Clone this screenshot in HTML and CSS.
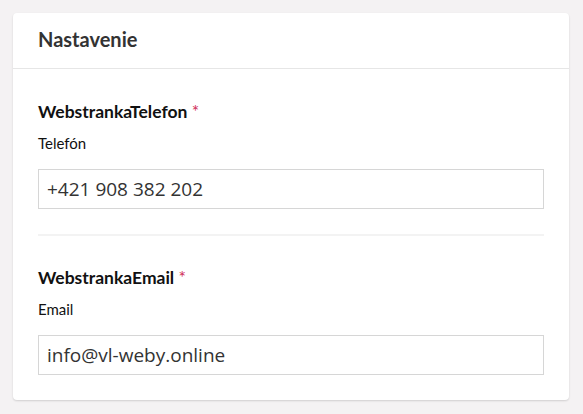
FILE: index.html
```html
<!DOCTYPE html>
<html lang="sk">
<head>
<meta charset="utf-8">
<title>Nastavenie</title>
<link rel="stylesheet" href="styles.css">
</head>
<body>
<div class="card">
  <div class="card-header">
    <h2 class="card-title">Nastavenie</h2>
  </div>
  <div class="card-body">
    <div class="field">
      <div class="field-name">WebstrankaTelefon <span class="req">*</span></div>
      <label class="field-label" for="tel">Telefón</label>
      <input class="field-input" id="tel" type="text" value="+421 908 382 202">
    </div>
    <div class="separator"></div>
    <div class="field">
      <div class="field-name">WebstrankaEmail <span class="req">*</span></div>
      <label class="field-label" for="mail">Email</label>
      <input class="field-input" id="mail" type="text" value="info@vl-weby.online">
    </div>
  </div>
</div>
</body>
</html>
```

FILE: styles.css
```css
html, body {
  margin: 0;
  padding: 0;
}
body {
  background: #f4f2f3;
  font-family: Lato, "Noto Sans", sans-serif;
  color: #1a1a1a;
  padding: 13px 14px 13px 13px;
}
.card {
  background: #ffffff;
  border-radius: 4px;
  box-shadow: 0 1px 2px rgba(0, 0, 0, 0.15);
}
.card-header {
  padding: 14px 25px 17px 25px;
  border-bottom: 1px solid #e6e6e6;
}
.card-title {
  margin: 0;
  font-size: 20px;
  line-height: 24px;
  font-weight: 700;
  color: #333333;
}
.card-body {
  padding: 32px 25px 25px 25px;
}
.field {
  display: flex;
  flex-direction: column;
}
.field-name {
  font-size: 17.5px;
  line-height: 22px;
  font-weight: 700;
  color: #111111;
}
.req {
  color: #d0305a;
  font-weight: 400;
}
.field-label {
  margin-top: 10px;
  font-size: 15px;
  line-height: 20px;
  color: #111111;
}
.field-input {
  margin-top: 16px;
  height: 40px;
  box-sizing: border-box;
  border: 1px solid #d6d6d6;
  border-radius: 0;
  padding: 0 8px;
  font-family: "Open Sans", "Noto Sans", sans-serif;
  font-size: 19px;
  color: #333333;
  background: #ffffff;
  outline: none;
}
.separator {
  height: 2px;
  background: #f3f3f3;
  margin: 25px 0 31px 0;
}
```
